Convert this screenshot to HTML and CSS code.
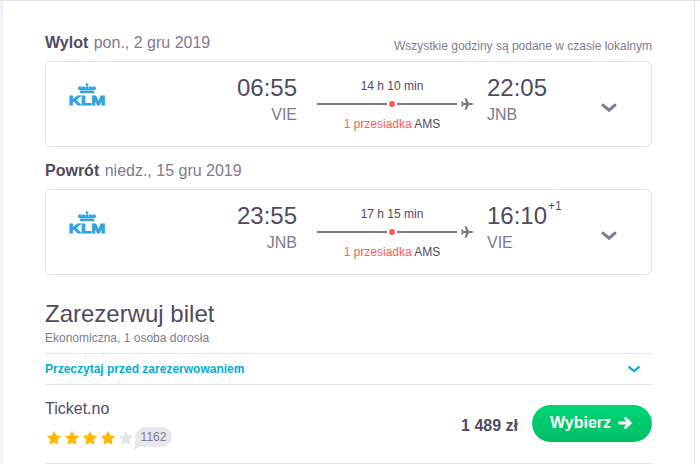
FILE: index.html
```
<!DOCTYPE html>
<html lang="pl">
<head>
    <meta charset="UTF-8">
    <meta name="viewport" content="width=device-width, initial-scale=1.0">
    <title>Zarezerwuj bilet</title>
    <link rel="stylesheet" href="styles.css">
</head>
<body>
    <!-- shared icons -->
    <svg class="sprite" width="0" height="0">
        <symbol id="crown" viewBox="0 0 36 22">
            <circle cx="18" cy="1.500" r="1.200"/>
            <path d="M17.500 1h1v4h-1zM16.500 1.200h3v.8h-3z"/>
            <circle cx="10.900" cy="5.200" r="1.900"/>
            <circle cx="14.500" cy="5" r="1.800"/>
            <circle cx="18" cy="5" r="1.800"/>
            <circle cx="21.500" cy="5" r="1.800"/>
            <circle cx="25.100" cy="5.200" r="1.900"/>
            <path d="M10.500 6h15l-1 1.500h-13zM11 8h14v2.200H11z"/>
        </symbol>
        <symbol id="plane" viewBox="0 0 12 12">
            <path d="M12 6c0-.6-.7-1-1.400-1H7.900L5.300.1H3.600L4.900 5H2.700L1.400 3.200H.1L.8 6 .1 8.800h1.300L2.700 7h2.200l-1.300 4.900h1.700L7.900 7h2.700c.7 0 1.400-.4 1.400-1z"/>
        </symbol>
        <symbol id="star" viewBox="0 0 14 14">
            <path d="M7 .5l2 4.200 4.600.6-3.400 3.200.9 4.800L7 11.100l-4.100 2.200.9-4.800L.4 5.300 5 4.700z" stroke-width=".7" stroke-linejoin="round"/>
        </symbol>
    </svg>

    <div class="panel">
        <div class="leg-header">
            <h2>Wylot <span>pon., 2 gru 2019</span></h2>
            <p class="note">Wszystkie godziny są podane w czasie lokalnym</p>
        </div>
        <div class="leg">
            <svg class="airline" width="36" height="22" viewBox="0 0 36 22">
                <use href="#crown"/>
                <text x="-.2" y="21.500" textLength="36.400" lengthAdjust="spacingAndGlyphs">KLM</text>
            </svg>
            <div class="point depart">
                <div class="time">06:55</div>
                <div class="airport">VIE</div>
            </div>
            <div class="route">
                <div class="duration">14 h 10 min</div>
                <div class="track">
                    <span class="line"></span><span class="dot"></span><span class="line short"></span>
                    <svg class="plane" width="12" height="12"><use href="#plane"/></svg>
                </div>
                <div class="stops"><span>1 przesiadka</span> AMS</div>
            </div>
            <div class="point">
                <div class="time">22:05</div>
                <div class="airport">JNB</div>
            </div>
            <svg class="chevron" width="16" height="10" viewBox="0 0 16 10"><path d="M2 2.200l6 5 6-5"/></svg>
        </div>

        <div class="leg-header">
            <h2>Powrót <span>niedz., 15 gru 2019</span></h2>
        </div>
        <div class="leg">
            <svg class="airline" width="36" height="22" viewBox="0 0 36 22">
                <use href="#crown"/>
                <text x="-.2" y="21.500" textLength="36.400" lengthAdjust="spacingAndGlyphs">KLM</text>
            </svg>
            <div class="point depart">
                <div class="time">23:55</div>
                <div class="airport">JNB</div>
            </div>
            <div class="route">
                <div class="duration">17 h 15 min</div>
                <div class="track">
                    <span class="line"></span><span class="dot"></span><span class="line short"></span>
                    <svg class="plane" width="12" height="12"><use href="#plane"/></svg>
                </div>
                <div class="stops"><span>1 przesiadka</span> AMS</div>
            </div>
            <div class="point">
                <div class="time">16:10<sup>+1</sup></div>
                <div class="airport">VIE</div>
            </div>
            <svg class="chevron" width="16" height="10" viewBox="0 0 16 10"><path d="M2 2.200l6 5 6-5"/></svg>
        </div>

        <h1>Zarezerwuj bilet</h1>
        <p class="cabin">Ekonomiczna, 1 osoba dorosła</p>

        <a class="read-more">
            Przeczytaj przed zarezerwowaniem
            <svg width="12" height="8" viewBox="0 0 12 8"><path d="M1.200 2.200L6 6.100l4.800-3.900"/></svg>
        </a>

        <div class="offer">
            <div class="agent">
                <div class="name">Ticket.no</div>
                <div class="rating">
                    <svg class="star" width="14" height="14"><use href="#star"/></svg>
                    <svg class="star" width="14" height="14"><use href="#star"/></svg>
                    <svg class="star" width="14" height="14"><use href="#star"/></svg>
                    <svg class="star" width="14" height="14"><use href="#star"/></svg>
                    <svg class="star empty" width="14" height="14"><use href="#star"/></svg>
                    <span class="reviews">1162
                        <svg class="tail" width="9" height="9" viewBox="0 0 9 9"><path d="M2 0C2 4 1.500 6 .3 7.500c-.5.700 0 1.300.8 1C4 7.800 5.500 6.500 9 5V0z"/></svg>
                    </span>
                </div>
            </div>
            <div class="price">1 489 zł</div>
            <button class="select">Wybierz
                <svg width="14" height="12" viewBox="0 0 14 12"><path d="M1.500 6h10.500M7.500 1.500L12.200 6l-4.700 4.500"/></svg>
            </button>
        </div>
    </div>
</body>
</html>
```

FILE: styles.css
```
* {
    box-sizing: border-box;
}

body {
    margin: 0;
    padding-left: 3px;
    height: 464px;
    overflow: hidden;
    background-color: #f2f2f6;
    border-top: 1px solid #e2e2e9;
    font-family: "Liberation Sans", Arial, sans-serif;
    color: #504b60;
    box-shadow: inset -5px 0 #fff;
}

h1, h2, p {
    margin: 0;
    font-weight: normal;
}

svg {
    display: block;
    flex-shrink: 0;
}

.sprite {
    position: absolute;
}

.panel {
    width: 692px;
    height: 463px;
    padding: 30px 42px 0;
    background-color: #fff;
    border-right: 1px solid #e2e2e9;
}

/* flight legs */
.leg-header {
    display: flex;
    justify-content: space-between;
    align-items: flex-end;
    width: 607px;
    margin-bottom: 6px;
}

.leg-header h2 {
    font-size: 16px;
    line-height: 24px;
    font-weight: bold;
}

.leg-header span {
    margin-left: 1px;
    font-weight: normal;
    color: #7e7b8e;
}

.note {
    font-size: 12px;
    line-height: 17px;
    color: #7e7b8e;
}

.leg {
    display: grid;
    grid-template-columns: 36px 172px 150px 94px 16px;
    column-gap: 20px;
    align-items: start;
    width: 607px;
    height: 86px;
    margin-bottom: 12px;
    padding: 12px 0 0 23px;
    border: 1px solid #e2e2e9;
    border-radius: 6px;
}

.airline {
    margin-top: 9px;
    overflow: visible;
    fill: #32a2dd;
    font-size: 13.500px;
    font-weight: bold;
}

.airline text {
    stroke: #32a2dd;
    stroke-width: .9px;
}

.depart {
    text-align: right;
}

.time {
    font-size: 24px;
    line-height: 28px;
    white-space: nowrap;
}

.time sup {
    margin-left: 1px;
    font-size: 12px;
    line-height: 0;
    vertical-align: 14px;
}

.airport {
    margin-top: 1px;
    font-size: 16px;
    line-height: 24px;
    color: #7e7b8e;
}

.route {
    padding-top: 3px;
    font-size: 12px;
    line-height: 18px;
    text-align: center;
}

.track {
    display: flex;
    align-items: center;
    width: 156px;
    height: 18px;
    margin-bottom: 2px;
}

.line {
    width: 70px;
    height: 2px;
    background-color: #7e7b8e;
}

.line.short {
    width: 60px;
}

.dot {
    width: 6px;
    height: 6px;
    margin: 0 2px;
    border-radius: 50%;
    background-color: #ff5a5a;
}

.plane {
    margin-left: auto;
    fill: #7e7b8e;
}

.stops span {
    color: #ff5a5a;
}

.chevron {
    margin-top: 29px;
    fill: none;
    stroke: #7e7b8e;
    stroke-width: 3;
    stroke-linecap: round;
}

/* booking */
h1 {
    margin-top: 24px;
    font-size: 24px;
    line-height: 30px;
}

.cabin {
    font-size: 12px;
    line-height: 18px;
    color: #7e7b8e;
}

.read-more {
    display: flex;
    justify-content: space-between;
    align-items: center;
    width: 607px;
    height: 32px;
    margin-top: 6px;
    padding-right: 12px;
    border-top: 1px solid #e2e2e9;
    border-bottom: 1px solid #e2e2e9;
    font-size: 12px;
    font-weight: bold;
    color: #00aed4;
}

.read-more svg {
    fill: none;
    stroke: #00aed4;
    stroke-width: 2.200;
    stroke-linecap: round;
}

.offer {
    display: flex;
    align-items: flex-start;
    width: 607px;
    height: 79px;
    border-bottom: 1px solid #e2e2e9;
}

.agent {
    flex: 1;
}

.name {
    margin-top: 12px;
    font-size: 16px;
    line-height: 24px;
}

.rating {
    display: flex;
    align-items: center;
    gap: 4px;
    margin-top: 6px;
    padding-left: 2px;
}

.star {
    margin-top: 2px;
    overflow: visible;
    fill: #ffb700;
    stroke: #ffb700;
}

.star.empty {
    fill: #e5e4ea;
    stroke: #e5e4ea;
}

.reviews {
    position: relative;
    width: 37px;
    height: 20px;
    margin-left: -2px;
    border-radius: 10px;
    background-color: #e9e7ed;
    font-size: 12px;
    line-height: 20px;
    text-align: center;
    color: #7e7b8e;
}

.tail {
    position: absolute;
    left: -2px;
    bottom: -3px;
    fill: #e9e7ed;
}

.price {
    margin: 29px 14px 0 0;
    font-size: 16px;
    line-height: 24px;
    font-weight: bold;
}

.select {
    display: flex;
    align-items: center;
    gap: 7px;
    width: 120px;
    height: 37px;
    margin-top: 20px;
    padding: 0 0 2px 18px;
    border: none;
    border-radius: 19px;
    background: linear-gradient(#00d775, #00bd68);
    font-family: inherit;
    font-size: 16px;
    font-weight: bold;
    color: #fff;
    cursor: pointer;
}

.select svg {
    margin-top: 1px;
    fill: none;
    stroke: #fff;
    stroke-width: 2.800;
    stroke-linecap: round;
    stroke-linejoin: round;
}
```
